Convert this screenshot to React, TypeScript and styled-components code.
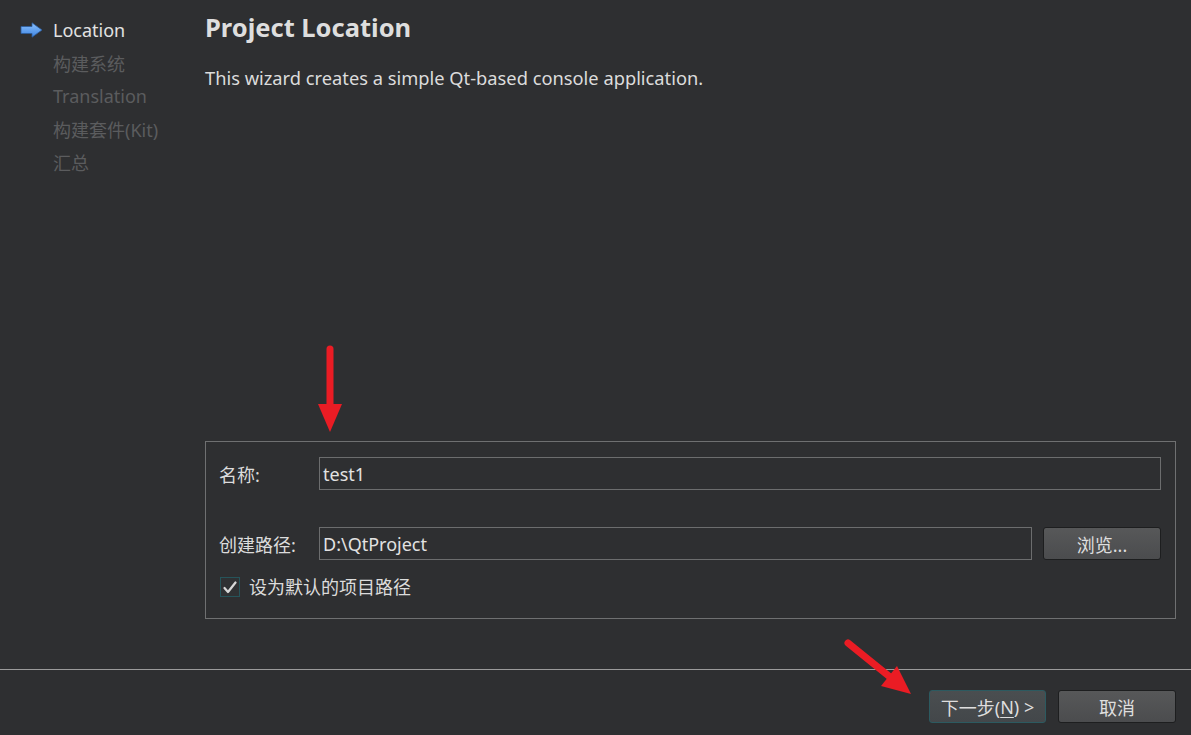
import React, { FC } from 'react';
import styled, { createGlobalStyle } from 'styled-components';

const GlobalStyle = createGlobalStyle`
  html, body {
    margin: 0;
    padding: 0;
    background: #2e2f31;
  }
  body {
    font-family: "Noto Sans", "Noto Sans CJK SC", sans-serif;
    color: #dcdcdc;
  }
`;

const Window = styled.div`
  position: relative;
  width: 1191px;
  height: 735px;
  background: #2e2f31;
  display: flex;
  flex-direction: column;
  overflow: hidden;
`;

const Body = styled.div`
  flex: 1;
  display: flex;
`;

const Sidebar = styled.ul`
  width: 185px;
  margin: 0;
  padding: 17px 0 0 20px;
  list-style: none;
  display: flex;
  flex-direction: column;
  gap: 8px;
`;

const Step = styled.li<{ $active?: boolean }>`
  display: flex;
  align-items: center;
  height: 25px;
  padding-left: 33px;
  position: relative;
  font-size: 18px;
  color: ${(p) => (p.$active ? '#e2e2e2' : '#5b5c5e')};
  white-space: nowrap;
`;

const StepIcon = styled.svg`
  position: absolute;
  left: 0;
  top: 5px;
`;

const Content = styled.div`
  flex: 1;
  display: flex;
  flex-direction: column;
  padding: 7px 15px 50px 0;
`;

const Title = styled.h1`
  margin: 0;
  font-size: 25.5px;
  font-weight: 700;
  line-height: 40px;
  color: #dedede;
`;

const Description = styled.p`
  margin: 19px 0 0;
  font-size: 18.3px;
  line-height: 24px;
  color: #dcdcdc;
`;

const Frame = styled.div`
  margin-top: auto;
  border: 1px solid #6f7071;
  height: 178px;
  box-sizing: border-box;
  padding: 15px 14px 0 13px;
  display: flex;
  flex-direction: column;
`;

const FieldRow = styled.div<{ $gap?: number }>`
  display: flex;
  align-items: center;
  margin-top: ${(p) => p.$gap ?? 0}px;
`;

const Label = styled.span`
  width: 100px;
  font-size: 18px;
  color: #dcdcdc;
`;

const Input = styled.div`
  flex: 1;
  height: 33px;
  box-sizing: border-box;
  border: 1px solid #6c6d6e;
  padding: 0 3px;
  display: flex;
  align-items: center;
  font-size: 18px;
  color: #e2e2e2;
`;

const Button = styled.button<{ $primary?: boolean }>`
  height: 33px;
  width: ${(p) => (p.$primary ? 117 : 118)}px;
  border-radius: 3px;
  border: 1px solid ${(p) => (p.$primary ? '#2c5a60' : '#1d1e1f')};
  background: ${(p) =>
    p.$primary
      ? 'linear-gradient(#4a4e50, #43474a)'
      : 'linear-gradient(#575859, #4b4c4e)'};
  color: #dedede;
  font-family: "Noto Sans", "Noto Sans CJK SC", sans-serif;
  font-size: 18px;
  padding: 0;
  display: flex;
  align-items: center;
  justify-content: center;
`;

const BrowseButton = styled(Button)`
  margin-left: 11px;
`;

const CheckRow = styled.label`
  display: flex;
  align-items: center;
  gap: 9px;
  margin-top: 15px;
  padding-left: 1px;
  font-size: 18px;
  line-height: 24px;
  color: #dcdcdc;
`;

const CheckBox = styled.span`
  width: 20px;
  height: 20px;
  box-sizing: border-box;
  border: 1px solid #26545a;
  background: #2f3133;
  display: flex;
  align-items: center;
  justify-content: center;
`;

const Separator = styled.div`
  height: 1px;
  background: #9b9b9b;
`;

const Footer = styled.div`
  height: 65px;
  display: flex;
  justify-content: flex-end;
  align-items: flex-start;
  gap: 12px;
  padding: 20px 15px 0 0;
  box-sizing: border-box;
`;

const Underline = styled.span`
  text-decoration: underline;
  text-underline-offset: 3px;
`;

const Overlay = styled.svg`
  position: absolute;
  left: 0;
  top: 0;
  pointer-events: none;
`;

const steps = ['构建系统', 'Translation', '构建套件(Kit)', '汇总'];

const App: FC = () => {
  return (
    <>
      <GlobalStyle />
      <Window>
        <Body>
          <Sidebar>
            <Step $active>
              <StepIcon width="23" height="16" viewBox="0 0 23 16">
                <defs>
                  <linearGradient id="ag" x1="0" y1="0" x2="0" y2="1">
                    <stop offset="0" stopColor="#8cc2ff" />
                    <stop offset="1" stopColor="#3d83e0" />
                  </linearGradient>
                </defs>
                <path
                  d="M1 4.5 H12 V0.8 L22 8 L12 15.2 V11.5 H1 Z"
                  fill="url(#ag)"
                  stroke="#2b5c9c"
                  strokeWidth="0.8"
                  strokeLinejoin="round"
                />
              </StepIcon>
              Location
            </Step>
            {steps.map((s) => (
              <Step key={s}>{s}</Step>
            ))}
          </Sidebar>
          <Content>
            <Title>Project Location</Title>
            <Description>This wizard creates a simple Qt-based console application.</Description>
            <Frame>
              <FieldRow>
                <Label>名称:</Label>
                <Input>test1</Input>
              </FieldRow>
              <FieldRow $gap={37}>
                <Label>创建路径:</Label>
                <Input>D:\QtProject</Input>
                <BrowseButton>浏览...</BrowseButton>
              </FieldRow>
              <CheckRow>
                <CheckBox>
                  <svg width="14" height="13" viewBox="0 0 14 13">
                    <path
                      d="M1.5 7 L5 11 L12.5 1.5"
                      fill="none"
                      stroke="#d8d8d8"
                      strokeWidth="2.2"
                      strokeLinecap="round"
                      strokeLinejoin="round"
                    />
                  </svg>
                </CheckBox>
                设为默认的项目路径
              </CheckRow>
            </Frame>
          </Content>
        </Body>
        <Separator />
        <Footer>
          <Button $primary>
            下一步(<Underline>N</Underline>) &gt;
          </Button>
          <Button>取消</Button>
        </Footer>
        <Overlay width="1191" height="735" viewBox="0 0 1191 735">
          <line x1="330" y1="349" x2="330" y2="410" stroke="#ea1c24" strokeWidth="7" strokeLinecap="round" />
          <polygon points="318,404 342,404 330,432" fill="#ea1c24" />
          <line x1="848" y1="643" x2="890" y2="677" stroke="#ea1c24" strokeWidth="7" strokeLinecap="round" />
          <polygon points="881,686 897,666 911,694" fill="#ea1c24" />
        </Overlay>
      </Window>
    </>
  );
};

export default App;
